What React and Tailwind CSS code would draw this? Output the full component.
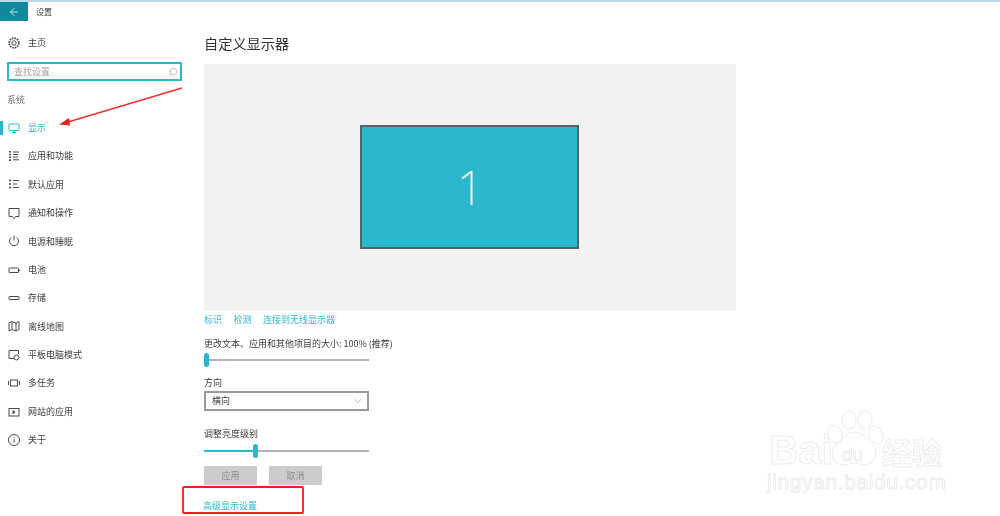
import { ArrowLeft, ChevronDown, Search } from "lucide-react";

const Ic = ({ children }) => (
  <svg width="14" height="14" viewBox="0 0 14 14" fill="none" stroke="#4a4a4a" strokeWidth="1" className="shrink-0">
    {children}
  </svg>
);

const icons = {
  gear: (
    <Ic>
      <circle cx="7" cy="7" r="2.2" />
      <circle cx="7" cy="7" r="4.8" strokeWidth="1.8" strokeDasharray="1.6 0.9" />
    </Ic>
  ),
  display: (
    <svg width="14" height="14" viewBox="0 0 14 14" fill="none" stroke="#2bb8cd" strokeWidth="1" className="shrink-0">
      <rect x="2" y="3" width="10" height="6.5" rx="0.5" />
      <path d="M5 11.5h4M7 9.5v2" />
    </svg>
  ),
  apps: (
    <Ic>
      <path d="M3 2v1.500M3 4.800v1.500M3 7.500v1.500M3 10.200v1.800" strokeWidth="2" />
      <path d="M6 3h6M6 5.500h5M6 8h5M6 10.800h6" />
    </Ic>
  ),
  defaults: (
    <Ic>
      <path d="M2 3.500h2M2 7h2M2 10.500h2" strokeWidth="1.500" />
      <path d="M6 3.500h6M6 7h4M6 10.500h6" />
    </Ic>
  ),
  notify: (
    <Ic>
      <path d="M2 2.500h10v8H8.500L7 12.500 5.500 10.500H2z" />
    </Ic>
  ),
  power: (
    <Ic>
      <path d="M4.500 3.500a4.500 4.500 0 1 0 5 0" />
      <path d="M7 1.500v5" />
    </Ic>
  ),
  battery: (
    <Ic>
      <rect x="2" y="5" width="9.500" height="4.500" rx="0.500" />
      <path d="M12.500 6.500v1.500" />
    </Ic>
  ),
  storage: (
    <Ic>
      <rect x="2" y="5.500" width="10" height="3" rx="0.500" />
    </Ic>
  ),
  map: (
    <Ic>
      <path d="M2 4l3-1.500 4 1.500 3-1.500v8L9 12 5 10.500 2 12z" />
      <path d="M5 2.500v8M9 4v8" />
    </Ic>
  ),
  tablet: (
    <Ic>
      <path d="M7 10.500H2v-8h9.500v3.500" />
      <circle cx="9.500" cy="9.500" r="2.500" />
    </Ic>
  ),
  multi: (
    <Ic>
      <rect x="3.500" y="4" width="7" height="6" />
      <path d="M1.500 5v4M12.500 5v4" />
    </Ic>
  ),
  web: (
    <Ic>
      <rect x="2" y="3.500" width="10" height="7.500" />
      <path d="M6 5.700l2 1.500-2 1.500z" fill="#4a4a4a" />
    </Ic>
  ),
  about: (
    <Ic>
      <circle cx="7" cy="7" r="5.500" />
      <path d="M7 6.200v3.500M7 4.200v1" />
    </Ic>
  ),
};

const navItems = [
  ["apps", "应用和功能"],
  ["defaults", "默认应用"],
  ["notify", "通知和操作"],
  ["power", "电源和睡眠"],
  ["battery", "电池"],
  ["storage", "存储"],
  ["map", "离线地图"],
  ["tablet", "平板电脑模式"],
  ["multi", "多任务"],
  ["web", "网站的应用"],
  ["about", "关于"],
];

function Slider({ at, fill }) {
  return (
    <div className="relative flex h-[18px] w-[165px] items-center">
      <div className="h-[2px] w-full bg-[#b4b4b4]" />
      {fill && <div className="absolute left-0 h-[2px] bg-[#2bb8cd]" style={{ width: at }} />}
      <div className="absolute h-[14px] w-[5px] rounded-sm bg-[#2bb8cd]" style={{ left: at }} />
    </div>
  );
}

export default function App() {
  return (
    <div className="relative h-[516px] w-[1000px] overflow-hidden bg-white text-[9px] text-[#3c3c3c] [font-family:'Noto_Sans_CJK_SC','Liberation_Sans',sans-serif] blur-[0.4px]">
      <div className="h-[2px] bg-[#b9d9ec]" />
      <div className="flex h-[19px] items-center">
        <div className="flex h-full w-[28px] items-center justify-center bg-[#0e8a9c]">
          <ArrowLeft size={12} color="#fff" strokeWidth={1.500} />
        </div>
        <span className="ml-[8px] text-[8px]">设置</span>
      </div>

      <div className="flex">
        <aside className="w-[204px] shrink-0">
          <div className="mt-[12px] flex h-[20px] items-center gap-[7px] pl-[7px]">
            {icons.gear}
            <span>主页</span>
          </div>
          <div className="ml-[7px] mt-[9px] flex h-[19px] w-[175px] items-center justify-between border-2 border-[#2bb8cd] pl-[5px] pr-[2px] text-[#a3a3a3]">
            <span>查找设置</span>
            <Search size={10} color="#b5b5b5" className="scale-x-[-1]" />
          </div>
          <div className="ml-[7px] mt-[12px] text-[#777]">系统</div>

          <div className="mt-[7px] flex h-[28.400px] items-center">
            <div className="h-[14px] w-[3px] bg-[#2bb8cd]" />
            <div className="ml-[4px] flex items-center gap-[7px] text-[#2bb8cd]">
              {icons.display}
              <span>显示</span>
            </div>
          </div>
          {navItems.map(([icon, label]) => (
            <div key={label} className="flex h-[28.400px] items-center gap-[7px] pl-[7px]">
              {icons[icon]}
              <span>{label}</span>
            </div>
          ))}
        </aside>

        <main className="flex-1">
          <h1 className="mt-[11px] text-[14.200px] leading-[22px] text-[#333]">自定义显示器</h1>
          <div className="mt-[10px] flex h-[247px] w-[532px] items-start justify-center bg-[#f2f2f2] pt-[61px]">
            <div className="-ml-[2px] flex h-[124px] w-[219px] items-center justify-center border-2 border-[#606060] bg-[#2bb8cd] pl-[3px] text-[48px] font-[200] text-white [font-family:'Noto_Sans','Liberation_Sans',sans-serif]">
              1
            </div>
          </div>
          <div className="mt-[2px] flex h-[14px] items-center gap-[11.500px] text-[#2bb8cd]">
            <span>标识</span>
            <span>检测</span>
            <span>连接到无线显示器</span>
          </div>
          <div className="mt-[10px] leading-[14px]">更改文本、应用和其他项目的大小: 100% (推荐)</div>
          <div>
            <Slider at={0} />
          </div>
          <div className="mt-[7px] leading-[14px]">方向</div>
          <div className="mt-[1px] flex h-[20px] w-[165px] items-center justify-between border-2 border-[#9a9a9a] pl-[6px] pr-[3px]">
            <span>横向</span>
            <ChevronDown size={12} color="#777" strokeWidth={1} />
          </div>
          <div className="mt-[16px] leading-[14px]">调整亮度级别</div>
          <div className="mt-[1px]">
            <Slider at={49} fill />
          </div>
          <div className="mt-[6px] flex gap-[12px] text-[#8c8c8c]">
            <div className="flex h-[19px] w-[53px] items-center justify-center bg-[#cccccc]">应用</div>
            <div className="flex h-[19px] w-[53px] items-center justify-center bg-[#cccccc]">取消</div>
          </div>
          <div className="-ml-[1px] mt-[14px] leading-[14px] text-[#2bb8cd]">高级显示设置</div>
        </main>
      </div>

      {/* red annotations */}
      <svg className="absolute left-0 top-0" width="320" height="516" fill="none">
        <path d="M182 88L68 122" stroke="#ee3030" strokeWidth="1.500" />
        <path d="M59 124.500L69 118l1 7.500z" fill="#e62020" />
        <rect x="183" y="487" width="120" height="26" rx="1" stroke="#f0201c" strokeWidth="1.800" />
      </svg>

      {/* watermark */}
      <div className="pointer-events-none absolute left-0 top-0 h-full w-full text-transparent [-webkit-text-stroke:1px_#ececec] [font-family:'Liberation_Sans',sans-serif]">
        <span className="absolute left-[769px] top-[426px] text-[41px] leading-[48px] font-bold">Bai</span>
        <span className="absolute left-[882px] top-[433px] text-[30px] leading-[36px] font-bold [font-family:'Noto_Sans_CJK_SC',sans-serif]">经验</span>
        <span className="absolute left-[767px] top-[470px] text-[21px] leading-[24px] tracking-[0.600px]">jingyan.baidu.com</span>
      </div>
      <svg className="absolute left-[825px] top-[405px]" width="80" height="70" fill="#fff" stroke="#ececec" strokeWidth="1">
        <ellipse cx="24" cy="15" rx="7" ry="9" />
        <ellipse cx="40" cy="15" rx="7" ry="9" transform="rotate(4 40 15)" />
        <ellipse cx="10" cy="29" rx="7" ry="9" transform="rotate(-25 10 29)" />
        <ellipse cx="51" cy="30" rx="7" ry="9" transform="rotate(-20 51 30)" />
        <path d="M30 27c8 0 12 8 18 13 6 6 2 20-8 20-4 0-6-2-10-2s-7 2-12 2C8 60 5 47 10 41c6-4 11-14 20-14z" />
      </svg>
      <span className="absolute left-[842px] top-[443px] text-[19px] leading-[24px] text-transparent [-webkit-text-stroke:1px_#ececec] [font-family:'Liberation_Sans',sans-serif]">du</span>
    </div>
  );
}
